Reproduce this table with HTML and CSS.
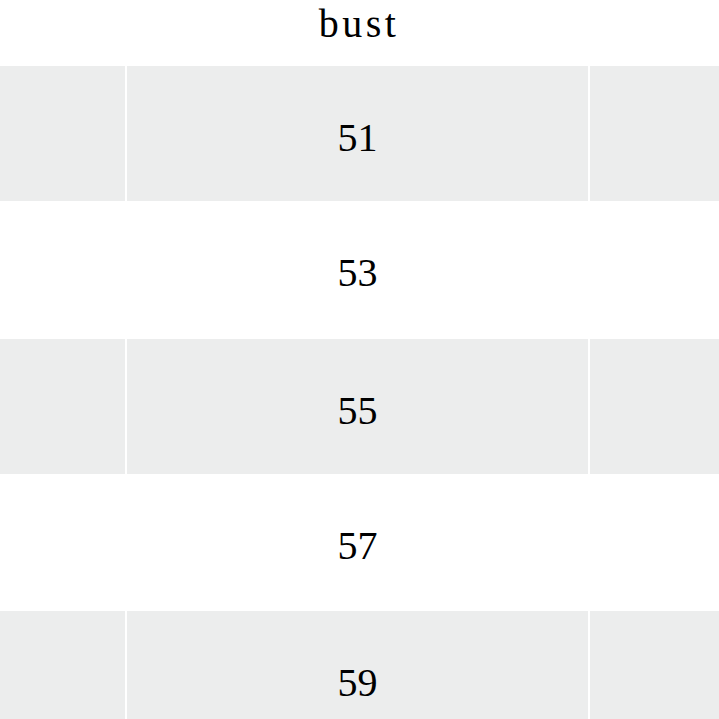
FILE: index.html
```html
<!DOCTYPE html>
<html>
<head>
<meta charset="utf-8">
<link rel="stylesheet" href="styles.css">
</head>
<body>
<div class="table">
  <div class="row head">
    <div class="cell"></div>
    <div class="cell title">bust</div>
    <div class="cell"></div>
  </div>
  <div class="row odd h135">
    <div class="cell"></div>
    <div class="cell num">51</div>
    <div class="cell"></div>
  </div>
  <div class="row even h138">
    <div class="cell"></div>
    <div class="cell num">53</div>
    <div class="cell"></div>
  </div>
  <div class="row odd h135">
    <div class="cell"></div>
    <div class="cell num">55</div>
    <div class="cell"></div>
  </div>
  <div class="row even h137">
    <div class="cell"></div>
    <div class="cell num">57</div>
    <div class="cell"></div>
  </div>
  <div class="row odd h135">
    <div class="cell"></div>
    <div class="cell num">59</div>
    <div class="cell"></div>
  </div>
</div>
</body>
</html>
```
FILE: styles.css
```css
html, body {
  margin: 0;
  padding: 0;
  background: #ffffff;
}
body {
  font-family: "Liberation Serif", "Times New Roman", serif;
  color: #000000;
  overflow: hidden;
}
.table {
  display: flex;
  flex-direction: column;
  width: 719px;
}
.row {
  display: grid;
  grid-template-columns: 125px 461px 1fr;
  column-gap: 2px;
}
.head {
  height: 66px;
}
.h135 { height: 135px; }
.h137 { height: 137px; }
.h138 { height: 138px; }
.odd .cell {
  background: #eceded;
}
.cell {
  font-size: 40px;
  line-height: 46px;
  text-align: center;
}
.title {
  padding-top: 1px;
  letter-spacing: 3.5px;
  text-indent: 3px;
}
.num {
  padding-top: 49px;
}
```
